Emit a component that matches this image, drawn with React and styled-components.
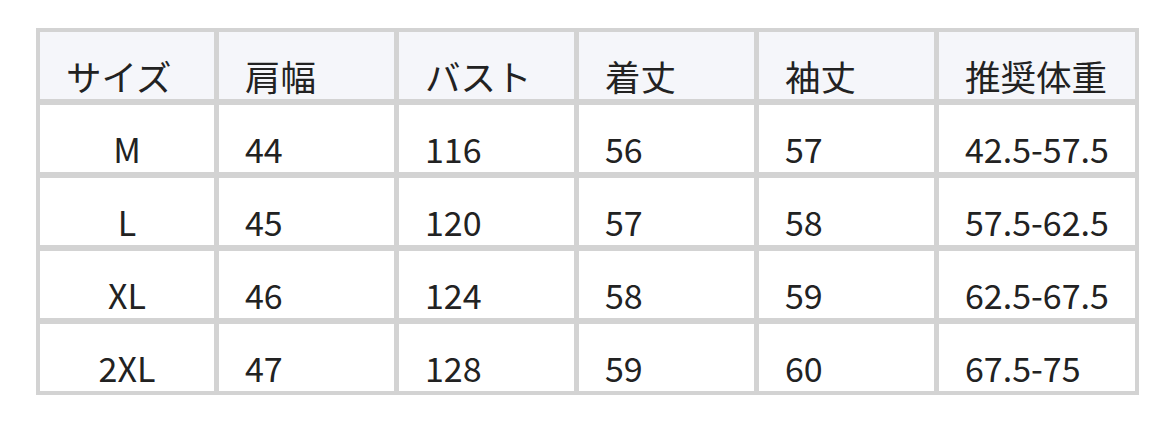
import React from 'react'
import styled, { createGlobalStyle } from 'styled-components'

const GlobalStyle = createGlobalStyle`
	body {
		margin: 0;
		background: #ffffff;
		font-family: "Noto Sans CJK JP", "Noto Sans", sans-serif;
	}
`

const Page = styled.div`
	padding: 28px 0 0 36px;
`

const Table = styled.div`
	width: 1103px;
	box-sizing: border-box;
	display: grid;
	grid-template-columns: 174px repeat(4, 175px) 1fr;
	grid-auto-rows: 67px;
	gap: 6px 5px;
	border: 4px solid #d3d3d3;
	background-color: #d3d3d3;
`

const Cell = styled.div`
	display: flex;
	align-items: flex-end;
	justify-content: ${({ $center }) => ($center ? 'center' : 'flex-start')};
	padding: 0 0 ${({ $head }) => ($head ? '6px' : '6px')} ${({ $center }) => ($center ? '0' : '26px')};
	background-color: ${({ $head }) => ($head ? '#f5f6fa' : '#ffffff')};
	font-size: ${({ $head }) => ($head ? '35.5px' : '34px')};
	line-height: 1;
	color: #222222;
`

const headers = ['サイズ', '肩幅', 'バスト', '着丈', '袖丈', '推奨体重']

const rows = [
	['M', '44', '116', '56', '57', '42.5-57.5'],
	['L', '45', '120', '57', '58', '57.5-62.5'],
	['XL', '46', '124', '58', '59', '62.5-67.5'],
	['2XL', '47', '128', '59', '60', '67.5-75'],
]

const App = () => (
	<Page>
		<GlobalStyle />
		<Table>
			{headers.map(h => (
				<Cell key={h} $head>{h}</Cell>
			))}
			{rows.map(row =>
				row.map((value, i) => (
					<Cell key={row[0] + i} $center={i === 0}>{value}</Cell>
				))
			)}
		</Table>
	</Page>
)

export default App
